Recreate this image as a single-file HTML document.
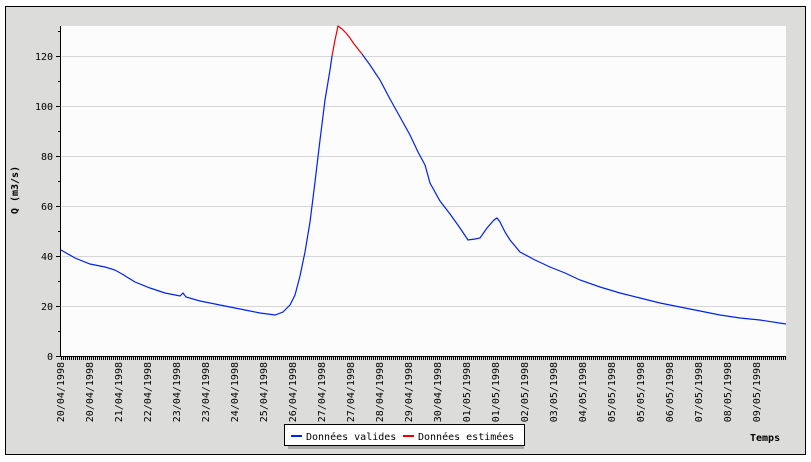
<!DOCTYPE html>
<html><head><meta charset="utf-8"><style>
body{margin:0;background:#fff;}
svg{display:block;}
text{font-family:"DejaVu Sans Mono","Liberation Mono",monospace;font-size:10px;fill:#000;}
</style></head><body>
<svg width="811" height="462" xmlns="http://www.w3.org/2000/svg">
<defs>
<pattern id="tk" x="61" y="0" width="2" height="10" patternUnits="userSpaceOnUse"><rect x="0" y="0" width="1" height="10" fill="#000"/></pattern>
</defs>
<rect x="0" y="0" width="811" height="462" fill="#fff"/>
<rect x="5.5" y="6.5" width="800" height="448" fill="#dcdddb" stroke="#000"/>
<rect x="61" y="26" width="725" height="330" fill="#fbfcfb"/>
<g stroke="#d6d6d6" stroke-width="1">
<line x1="62" y1="56.5" x2="786" y2="56.5"/><line x1="62" y1="106.5" x2="786" y2="106.5"/>
<line x1="62" y1="156.5" x2="786" y2="156.5"/><line x1="62" y1="206.5" x2="786" y2="206.5"/>
<line x1="62" y1="256.5" x2="786" y2="256.5"/><line x1="62" y1="306.5" x2="786" y2="306.5"/>
</g>
<line x1="60.5" y1="26" x2="60.5" y2="357" stroke="#000"/>
<line x1="60" y1="356.5" x2="786" y2="356.5" stroke="#000"/>
<rect x="61" y="356" width="725" height="4" fill="url(#tk)"/>
<g stroke="#000">
<line x1="56" y1="56.5" x2="61" y2="56.5"/><line x1="56" y1="106.5" x2="61" y2="106.5"/><line x1="56" y1="156.5" x2="61" y2="156.5"/><line x1="56" y1="206.5" x2="61" y2="206.5"/><line x1="56" y1="256.5" x2="61" y2="256.5"/><line x1="56" y1="306.5" x2="61" y2="306.5"/><line x1="56" y1="356.5" x2="61" y2="356.5"/>
<line x1="58" y1="31.5" x2="61" y2="31.5"/><line x1="58" y1="81.5" x2="61" y2="81.5"/><line x1="58" y1="131.5" x2="61" y2="131.5"/><line x1="58" y1="181.5" x2="61" y2="181.5"/><line x1="58" y1="231.5" x2="61" y2="231.5"/><line x1="58" y1="281.5" x2="61" y2="281.5"/><line x1="58" y1="331.5" x2="61" y2="331.5"/>
</g>
<g text-anchor="end">
<text x="53" y="60">120</text><text x="53" y="110">100</text><text x="53" y="160">80</text><text x="53" y="210">60</text><text x="53" y="260">40</text><text x="53" y="310">20</text><text x="53" y="360">0</text>
</g>
<text transform="translate(18,190) rotate(-90)" text-anchor="middle" font-weight="bold" font-size="10">Q (m3/s)</text>
<g text-anchor="end">
<text transform="translate(64,362) rotate(-90)">20/04/1998</text>
<text transform="translate(93,362) rotate(-90)">20/04/1998</text>
<text transform="translate(122,362) rotate(-90)">21/04/1998</text>
<text transform="translate(151,362) rotate(-90)">22/04/1998</text>
<text transform="translate(180,362) rotate(-90)">23/04/1998</text>
<text transform="translate(209,362) rotate(-90)">23/04/1998</text>
<text transform="translate(238,362) rotate(-90)">24/04/1998</text>
<text transform="translate(267,362) rotate(-90)">25/04/1998</text>
<text transform="translate(296,362) rotate(-90)">26/04/1998</text>
<text transform="translate(325,362) rotate(-90)">27/04/1998</text>
<text transform="translate(354,362) rotate(-90)">27/04/1998</text>
<text transform="translate(383,362) rotate(-90)">28/04/1998</text>
<text transform="translate(412,362) rotate(-90)">29/04/1998</text>
<text transform="translate(441,362) rotate(-90)">30/04/1998</text>
<text transform="translate(470,362) rotate(-90)">01/05/1998</text>
<text transform="translate(499,362) rotate(-90)">01/05/1998</text>
<text transform="translate(528,362) rotate(-90)">02/05/1998</text>
<text transform="translate(557,362) rotate(-90)">03/05/1998</text>
<text transform="translate(586,362) rotate(-90)">04/05/1998</text>
<text transform="translate(615,362) rotate(-90)">05/05/1998</text>
<text transform="translate(644,362) rotate(-90)">05/05/1998</text>
<text transform="translate(673,362) rotate(-90)">06/05/1998</text>
<text transform="translate(702,362) rotate(-90)">07/05/1998</text>
<text transform="translate(731,362) rotate(-90)">08/05/1998</text>
<text transform="translate(760,362) rotate(-90)">09/05/1998</text>
</g>
<polyline fill="none" stroke="#0022ee" stroke-width="1.2" points="61,250 75,258 90,264 105,267 115,270 122,274 135,282 150,288 165,293 180,296 183,293 186,297 200,301 230,307 260,313 275,315 283,312 290,305 295,295 300,276 305,252 310,222 315,182 320,140 325,100 330,70 332,56"/>
<polyline fill="none" stroke="#ee0000" stroke-width="1.2" points="332,56 335,40 338,26 342,29 346,33 350,38 354,44 358,49 362,54"/>
<polyline fill="none" stroke="#0022ee" stroke-width="1.2" points="362,54 370,65 380,80 390,99 400,117 410,135 418,152 425,165 430,183 440,201 450,214 460,228 468,240 475,239 480,238 487,228 494,220 497,218 500,222 505,232 510,240 520,252 535,260 550,267 565,273 580,280 600,287 620,293 640,298 660,303 680,307 700,311 720,315 740,318 760,320 786,324"/>
<rect x="288" y="428" width="236" height="21" fill="#a8a8a8"/>
<rect x="284.5" y="424.5" width="240" height="21" fill="#fff" stroke="#000"/>
<line x1="291" y1="436" x2="302" y2="436" stroke="#0022ee" stroke-width="2"/>
<text x="306" y="440">Données valides</text>
<line x1="403" y1="436" x2="414" y2="436" stroke="#ee0000" stroke-width="2"/>
<text x="418" y="440">Données estimées</text>
<text x="750" y="441" font-weight="bold">Temps</text>
</svg>
</body></html>
